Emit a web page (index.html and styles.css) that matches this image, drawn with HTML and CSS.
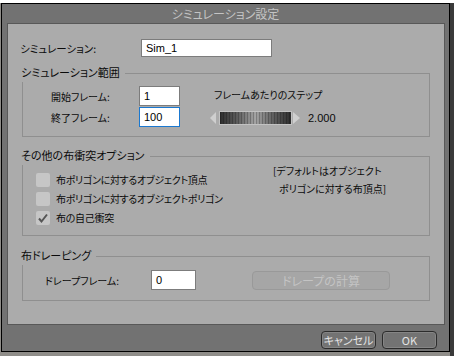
FILE: index.html
```html
<!DOCTYPE html>
<html lang="ja">
<head>
<meta charset="utf-8">
<link rel="stylesheet" href="styles.css">
</head>
<body>
<div class="topstrip"></div>
<div class="dialog">
  <div class="titlebar">シミュレーション設定</div>
  <div class="panel">
    <div class="row-name">
      <span class="lbl-name">シミュレーション:</span>
      <div class="field field-name">Sim_1</div>
    </div>

    <section class="group g1">
      <div class="legend">シミュレーション範囲</div>
      <div class="col-frames">
        <div class="frow"><span class="lbl-frame">開始フレーム:</span><div class="field field-frame">1</div></div>
        <div class="frow"><span class="lbl-frame">終了フレーム:</span><div class="field field-frame focus">100</div></div>
      </div>
      <div class="col-step">
        <div class="step-label">フレームあたりのステップ</div>
        <div class="slider">
          <svg class="arrow" width="6" height="12" viewBox="0 0 6 12"><path d="M6 0 L0 6 L6 12 Z" fill="#cfcfcf"/></svg>
          <div class="bar"></div>
          <svg class="arrow" width="7" height="12" viewBox="0 0 7 12"><path d="M0 0 L7 6 L0 12 Z" fill="#cfcfcf"/></svg>
          <span class="value">2.000</span>
        </div>
      </div>
    </section>

    <section class="group g2">
      <div class="legend">その他の布衝突オプション</div>
      <div class="checks">
        <div class="crow"><span class="cbox"></span><span>布ポリゴンに対するオブジェクト頂点</span></div>
        <div class="crow"><span class="cbox"></span><span>布ポリゴンに対するオブジェクトポリゴン</span></div>
        <div class="crow"><span class="cbox"><svg width="14" height="14" viewBox="0 0 14 14"><path d="M3 7.5 L5.5 10.5 L11 3.5" fill="none" stroke="#555" stroke-width="2"/></svg></span><span>布の自己衝突</span></div>
      </div>
      <div class="note">
        <div>[デフォルトはオブジェクト</div>
        <div class="note2">ポリゴンに対する布頂点]</div>
      </div>
    </section>

    <section class="group g3">
      <div class="legend">布ドレーピング</div>
      <div class="drape">
        <span class="lbl-drape">ドレープフレーム:</span>
        <div class="field field-drape">0</div>
        <div class="btn-disabled">ドレープの計算</div>
      </div>
    </section>
  </div>
  <div class="footer">
    <div class="btn">キャンセル</div>
    <div class="btn">OK</div>
  </div>
</div>
</body>
</html>
```

FILE: styles.css
```css
html, body {
  margin: 0;
  padding: 0;
}
body {
  width: 454px;
  height: 356px;
  overflow: hidden;
  background: linear-gradient(90deg, #8f8d89 0 450px, #3a3a3a 450px);
  font-family: "Noto Sans CJK JP", sans-serif;
  font-feature-settings: "palt";
  color: #0a0a0a;
}
.topstrip {
  height: 3px;
  background: #fff;
}
.dialog {
  margin-left: 1px;
  width: 449px;
  height: 349px;
  box-sizing: border-box;
  border: 1px solid #000;
  background: #727272;
  display: flex;
  flex-direction: column;
}
.titlebar {
  height: 19px;
  line-height: 19px;
  text-align: center;
  color: #c4c4c4;
  font-size: 12px;
}
.panel {
  margin: 0 4px 0 5px;
  height: 302px;
  box-sizing: border-box;
  border: 1px solid #585858;
  background: #ababab;
}
.row-name {
  display: flex;
  align-items: center;
  margin-top: 15px;
  padding-left: 12px;
  height: 18px;
  font-size: 10.5px;
}
.lbl-name {
  width: 121px;
}
.field {
  background: #fff;
  border: 1px solid #7c7c7c;
  box-sizing: border-box;
  padding-left: 4px;
  font-family: "Liberation Sans", sans-serif;
  font-size: 11px;
  display: flex;
  align-items: center;
  color: #000;
}
.field.focus {
  border-color: #1a78d0;
}
.field-name {
  width: 131px;
  height: 18px;
}
.group {
  position: relative;
  margin-left: 14px;
  width: 408px;
  box-sizing: border-box;
  border: 1px solid #8f8f8f;
  display: flex;
}
.legend {
  position: absolute;
  left: -3px;
  top: -9px;
  padding: 0 5px 3px 1px;
  background: #ababab;
  font-size: 11px;
  line-height: 14px;
  white-space: nowrap;
}
.g1 {
  margin-top: 16px;
  height: 64px;
}
.col-frames {
  padding: 12px 0 0 28px;
  font-size: 10px;
}
.frow {
  display: flex;
  align-items: center;
  height: 20px;
}
.frow + .frow {
  margin-top: 1px;
}
.lbl-frame {
  width: 88px;
}
.field-frame {
  width: 41px;
  height: 20px;
}
.col-step {
  margin-left: 30px;
  padding-top: 15px;
  font-size: 10px;
}
.step-label {
  padding-left: 4px;
  line-height: 12px;
}
.slider {
  display: flex;
  align-items: center;
  margin-top: 10px;
  height: 14px;
}
.bar {
  margin-left: 3px;
  margin-right: 1px;
  width: 73px;
  height: 14px;
  box-sizing: border-box;
  border: 1px solid #c2c2c2;
  background:
    repeating-linear-gradient(90deg, rgba(0,0,0,0.22) 0 1px, transparent 1px 3px),
    linear-gradient(90deg, #2e2e2e, #5e5e5e 25%, #a4a4a4 50%, #5e5e5e 75%, #2e2e2e);
}
.value {
  margin-left: 8px;
  font-family: "Liberation Sans", sans-serif;
  font-size: 11px;
}
.g2 {
  margin-top: 19px;
  height: 80px;
}
.checks {
  width: 250px;
  box-sizing: border-box;
  padding: 13px 0 0 13px;
  font-size: 10px;
  letter-spacing: -0.3px;
}
.crow {
  display: flex;
  align-items: center;
  height: 19px;
}
.cbox {
  width: 14px;
  height: 14px;
  border-radius: 2px;
  background: #c6c6c6;
  margin-right: 6px;
  display: flex;
}
.note {
  padding-top: 5px;
  font-size: 10px;
  line-height: 18px;
}
.note2 {
  padding-left: 6px;
}
.g3 {
  margin-top: 20px;
  height: 45px;
}
.drape {
  display: flex;
  align-items: center;
  padding: 13px 0 0 22px;
  height: 20px;
  font-size: 10px;
}
.lbl-drape {
  width: 106px;
}
.field-drape {
  width: 45px;
  height: 20px;
}
.btn-disabled {
  margin-left: 56px;
  width: 138px;
  height: 19px;
  box-sizing: border-box;
  border: 1px solid #999;
  border-radius: 4px;
  background: #a6a6a6;
  color: #c4c4c4;
  font-size: 12px;
  display: flex;
  align-items: center;
  justify-content: center;
}
.footer {
  flex: 1;
  display: flex;
  justify-content: flex-end;
  align-items: flex-start;
  gap: 6px;
  padding: 6px 12px 0 0;
}
.btn {
  width: 55px;
  height: 18px;
  box-sizing: border-box;
  border: 1px solid #2c2c2c;
  border-radius: 4px;
  background: #737373;
  box-shadow: inset 0 0 0 1px #858585;
  color: #e4e4e4;
  font-size: 11px;
  display: flex;
  align-items: center;
  justify-content: center;
}
```
